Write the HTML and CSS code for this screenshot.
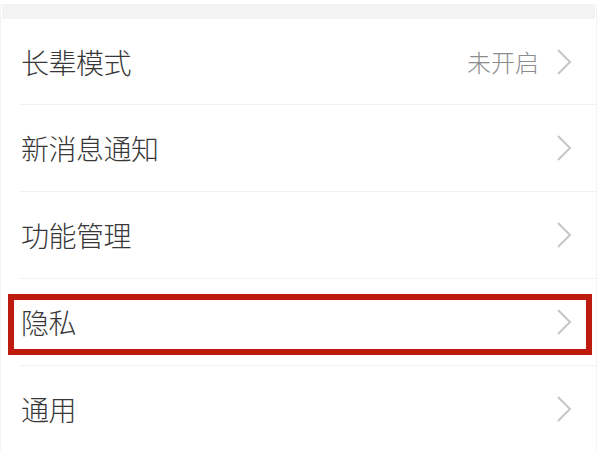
FILE: index.html
```html
<!DOCTYPE html>
<html lang="zh">
<head>
<meta charset="utf-8">
<link rel="stylesheet" href="styles.css">
</head>
<body>
<div class="screen">
  <div class="band"></div>
  <ul class="list">
    <li class="row first">
      <span class="label">长辈模式</span>
      <span class="right"><span class="value">未开启</span><svg class="chev" viewBox="0 0 16 28" width="16" height="28"><polyline points="2,2 14,14 2,26"/></svg></span>
    </li>
    <li class="row">
      <span class="label">新消息通知</span>
      <span class="right"><svg class="chev" viewBox="0 0 16 28" width="16" height="28"><polyline points="2,2 14,14 2,26"/></svg></span>
    </li>
    <li class="row">
      <span class="label">功能管理</span>
      <span class="right"><svg class="chev" viewBox="0 0 16 28" width="16" height="28"><polyline points="2,2 14,14 2,26"/></svg></span>
    </li>
    <li class="row">
      <span class="label">隐私</span>
      <span class="right"><svg class="chev" viewBox="0 0 16 28" width="16" height="28"><polyline points="2,2 14,14 2,26"/></svg></span>
    </li>
    <li class="row">
      <span class="label">通用</span>
      <span class="right"><svg class="chev" viewBox="0 0 16 28" width="16" height="28"><polyline points="2,2 14,14 2,26"/></svg></span>
    </li>
  </ul>
  <div class="highlight"></div>
</div>
</body>
</html>
```
FILE: styles.css
```css
html, body {
  margin: 0;
  padding: 0;
  background: #ffffff;
}
body {
  font-family: "Noto Sans CJK SC", "Noto Sans", sans-serif;
  width: 600px;
  height: 450px;
  overflow: hidden;
}
.screen {
  position: relative;
  width: 597px;
  height: 450px;
  border-left: 1px solid #f3f3f3;
  border-right: 1px solid #f3f3f3;
  box-sizing: border-box;
  background: #fff;
}
.band {
  margin: 4px 1px 0;
  height: 15px;
  background: #f3f3f3;
}
.list {
  list-style: none;
  margin: 0;
  padding: 0 0 0 19px;
}
.row {
  display: flex;
  align-items: center;
  justify-content: space-between;
  height: 86px;
  border-top: 1px solid #f2f2f2;
  padding-right: 24px;
}
.row.first {
  height: 85px;
  border-top: none;
}
.label {
  font-size: 28px;
  font-weight: 300;
  color: #383838;
  letter-spacing: -0.5px;
  padding-left: 1px;
}
.right {
  display: flex;
  align-items: center;
  gap: 17px;
}
.value {
  font-size: 24px;
  font-weight: 300;
  color: #8c8c8c;
}
.chev polyline {
  fill: none;
  stroke: #c6c6c6;
  stroke-width: 2;
}
.highlight {
  position: absolute;
  left: 7px;
  top: 290px;
  width: 584px;
  height: 61px;
  border: 6px solid #bf1a10;
  box-sizing: border-box;
}
```
